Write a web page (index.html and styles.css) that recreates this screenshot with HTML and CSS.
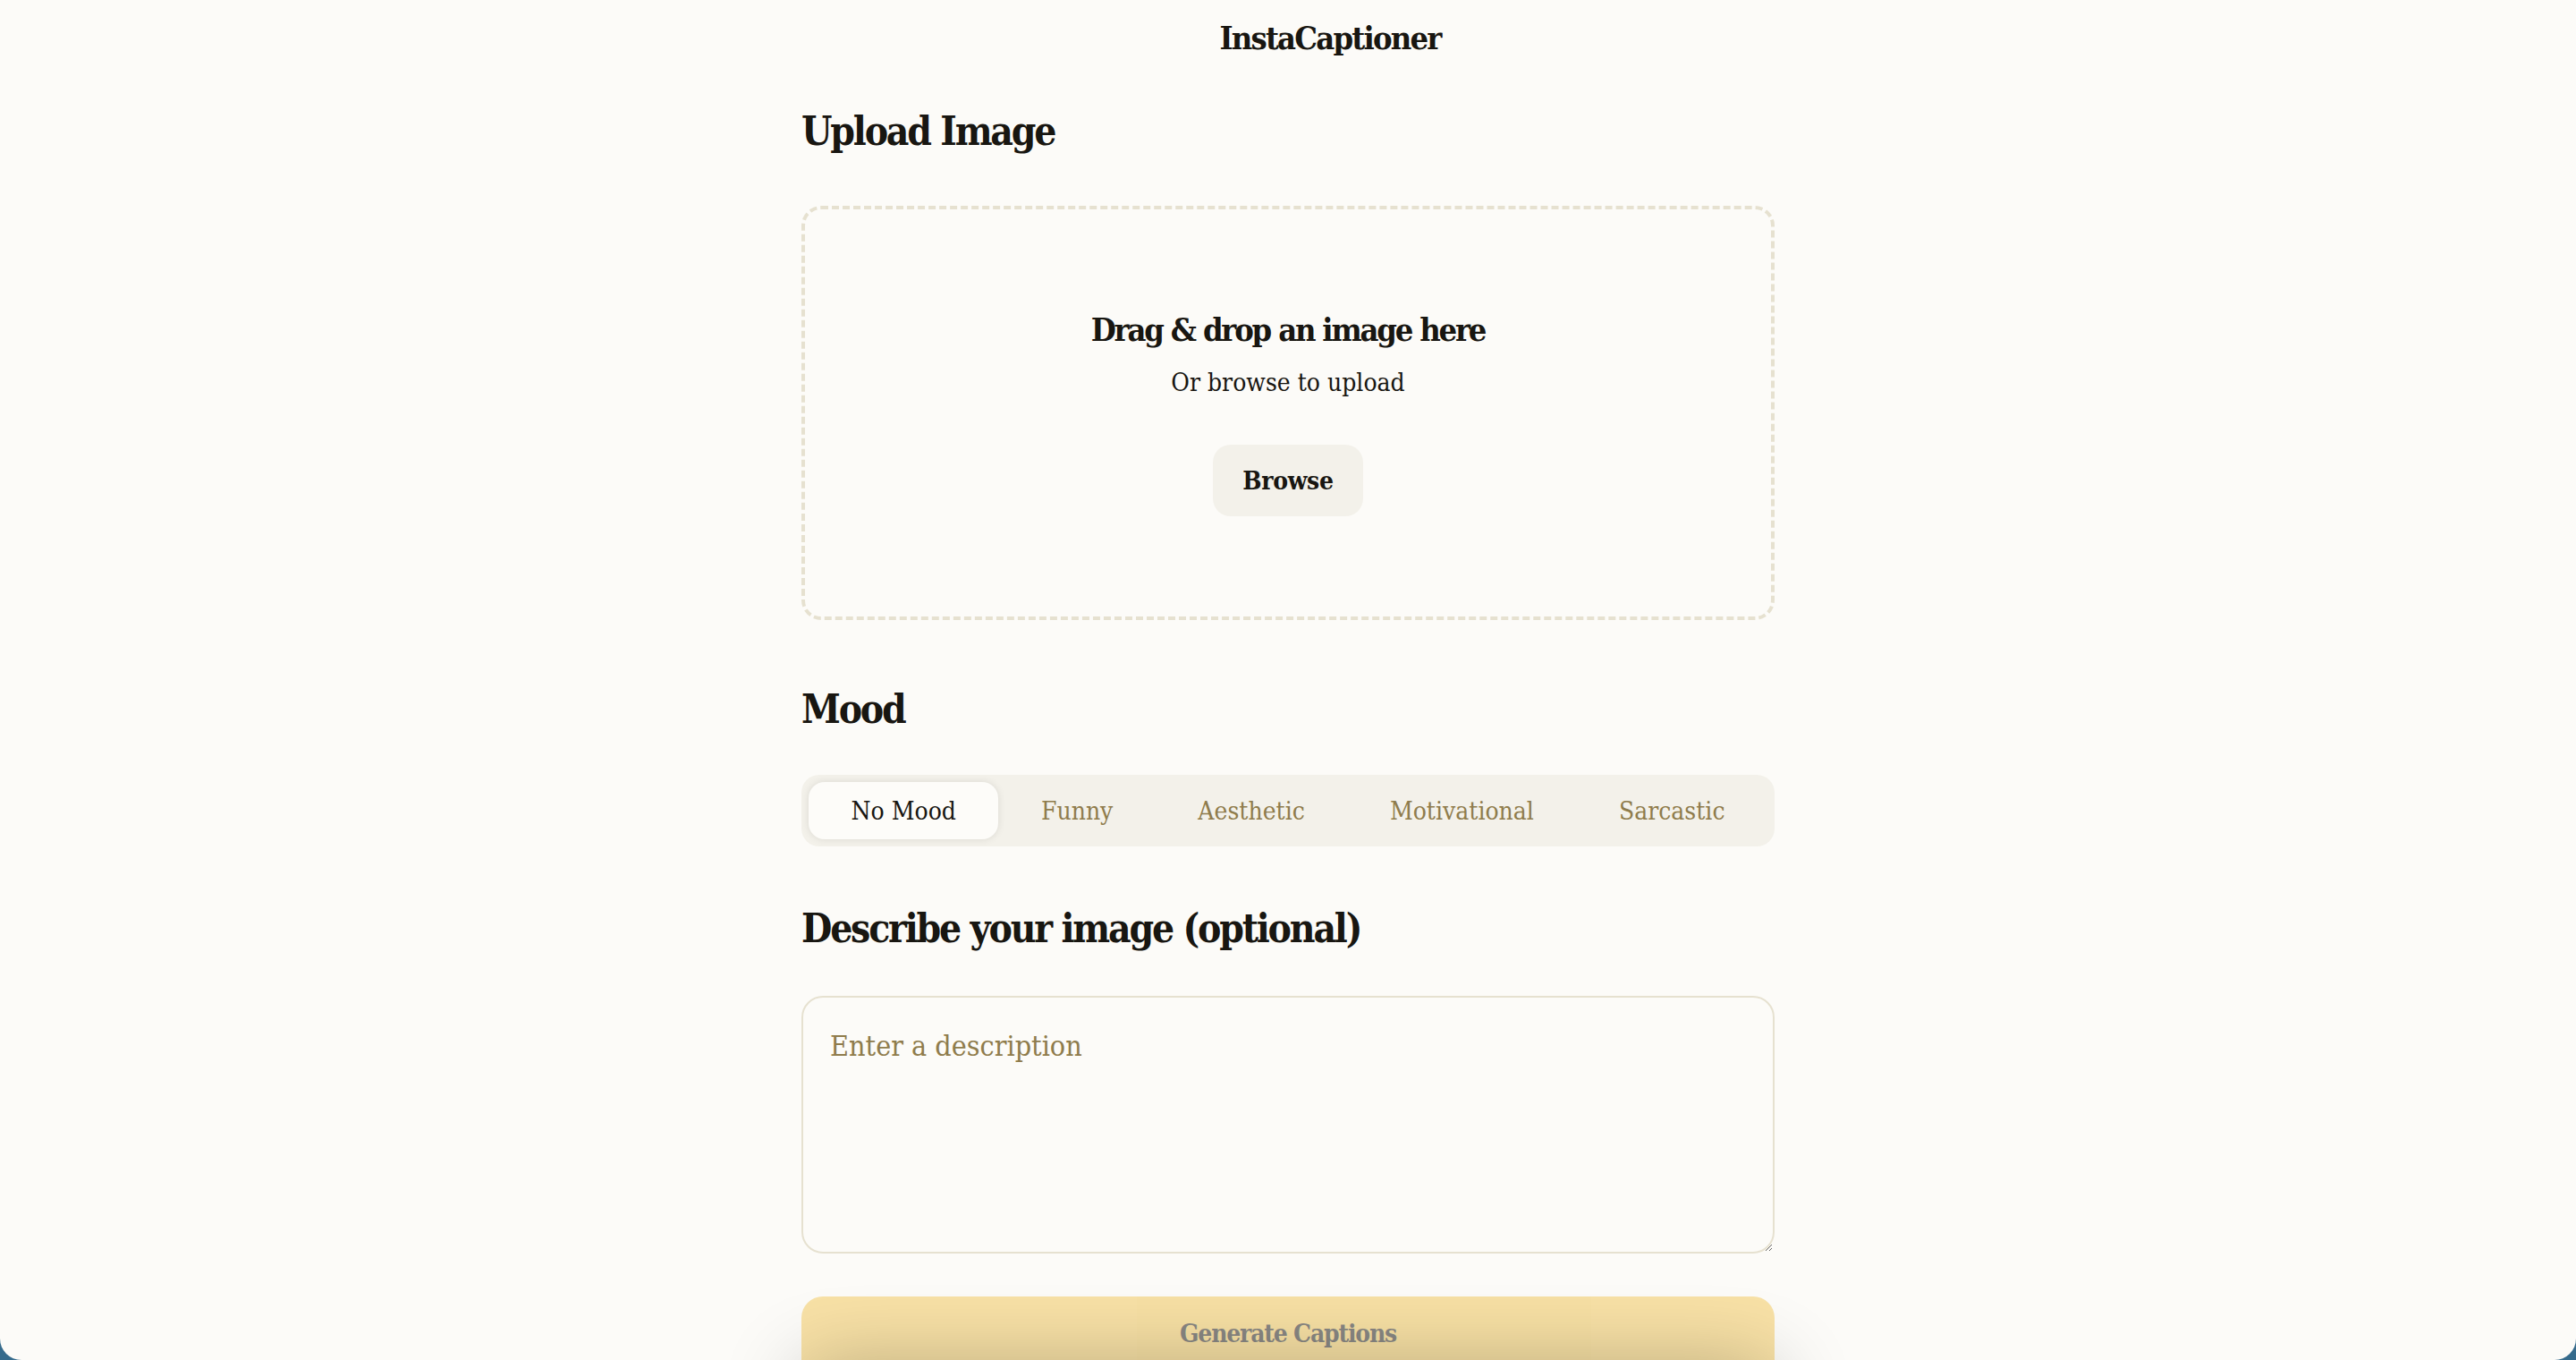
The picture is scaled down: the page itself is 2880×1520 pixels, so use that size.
FILE: index.html
```html
<!DOCTYPE html>
<html lang="en">
<head>
<meta charset="utf-8">
<title>InstaCaptioner</title>
<link rel="stylesheet" href="styles.css">
</head>
<body>
<div class="window">
  <header class="topbar">
    <h1 class="brand">InstaCaptioner</h1>
  </header>
  <main class="content">
    <h2 class="section-title first">Upload Image</h2>
    <div class="drop-wrap">
      <div class="dropzone">
        <div class="drop-text">
          <p class="drop-title">Drag &amp; drop an image here</p>
          <p class="drop-sub">Or browse to upload</p>
        </div>
        <button class="browse-btn" type="button">Browse</button>
      </div>
    </div>

    <h2 class="section-title">Mood</h2>
    <div class="mood-wrap">
      <div class="mood-bar">
        <label class="mood-item selected">No Mood</label>
        <label class="mood-item">Funny</label>
        <label class="mood-item">Aesthetic</label>
        <label class="mood-item">Motivational</label>
        <label class="mood-item">Sarcastic</label>
      </div>
    </div>

    <h2 class="section-title">Describe your image (optional)</h2>
    <div class="desc-wrap">
      <textarea class="desc" placeholder="Enter a description"></textarea>
    </div>

    <div class="gen-wrap">
      <button class="gen-btn" type="button" disabled>Generate Captions</button>
    </div>
  </main>
  <div class="bottom-shadow"></div>
</div>
</body>
</html>
```

FILE: styles.css
```css
* { box-sizing: border-box; }

html, body {
  margin: 0;
  padding: 0;
}

body {
  background: #366b8c;
  font-family: "DejaVu Serif Condensed", "DejaVu Serif", serif;
  font-stretch: condensed;
  color: #181611;
}

.window {
  position: relative;
  height: 100vh;
  overflow: hidden;
  background: #fcfbf8;
  border-radius: 0 0 24px 24px;
}

.topbar {
  display: flex;
  justify-content: center;
  padding: 20px 0 0 94px;
}

.brand {
  margin: 0;
  font-size: 36px;
  line-height: 45px;
  font-weight: 700;
  letter-spacing: -1.8px;
}

.content {
  width: 1088px;
  margin: 0 auto;
  display: flex;
  flex-direction: column;
}

.section-title {
  margin: 0;
  padding: 40px 0 24px;
  font-size: 44px;
  line-height: 55px;
  font-weight: 700;
  letter-spacing: -2.2px;
}

.section-title.first {
  padding-top: 54px;
}

.drop-wrap {
  padding: 32px 0;
}

.dropzone {
  display: flex;
  flex-direction: column;
  align-items: center;
  gap: 48px;
  border: 4px dashed #e6e1d0;
  border-radius: 22px;
  padding: 112px 48px;
}

.drop-text {
  display: flex;
  flex-direction: column;
  align-items: center;
  gap: 16px;
}

.drop-title {
  margin: 0;
  font-size: 36px;
  line-height: 45px;
  font-weight: 700;
  letter-spacing: -2.2px;
}

.drop-sub {
  margin: 0;
  font-size: 28px;
  line-height: 42px;
  font-weight: 400;
}

.browse-btn {
  height: 80px;
  padding: 0 32px;
  min-width: 168px;
  border: none;
  border-radius: 20px;
  background: #f3f1ea;
  color: #181611;
  font-family: inherit;
  font-stretch: condensed;
  font-size: 28px;
  font-weight: 700;
  letter-spacing: -0.3px;
}

.mood-wrap {
  padding: 22px 0 24px;
}

.mood-bar {
  display: flex;
  height: 80px;
  padding: 8px;
  border-radius: 20px;
  background: #f3f1ea;
}

.mood-item {
  flex-grow: 1;
  display: flex;
  align-items: center;
  justify-content: center;
  padding: 0 16px;
  border-radius: 18px;
  font-size: 28px;
  font-weight: 500;
  color: #8f7c4c;
}

.mood-item.selected {
  background: #fdfcf9;
  color: #181611;
  box-shadow: 0 0 8px rgba(0, 0, 0, 0.1);
}

.desc-wrap {
  padding: 24px 0;
}

.desc {
  display: block;
  width: 100%;
  height: 288px;
  padding: 30px;
  border: 2px solid #e6e1d0;
  border-radius: 24px;
  background: #fcfbf8;
  font-family: inherit;
  font-stretch: condensed;
  font-size: 32px;
  line-height: 48px;
  color: #181611;
  outline: none;
}

.desc::placeholder {
  color: #8f7c4c;
}

.gen-wrap {
  padding: 24px 0;
}

.gen-btn {
  width: 100%;
  height: 96px;
  border: none;
  border-radius: 24px;
  background: #f4c753;
  opacity: 0.5;
  color: #181611;
  font-family: inherit;
  font-stretch: condensed;
  font-size: 28px;
  font-weight: 700;
  letter-spacing: -1.2px;
  padding-bottom: 14px;
}

.bottom-shadow {
  position: absolute;
  left: 50%;
  bottom: -80px;
  width: 1088px;
  height: 70px;
  margin-left: -544px;
  border-radius: 24px;
  box-shadow: 0 0 90px 0 rgba(0, 0, 0, 0.3);
  pointer-events: none;
}
```
